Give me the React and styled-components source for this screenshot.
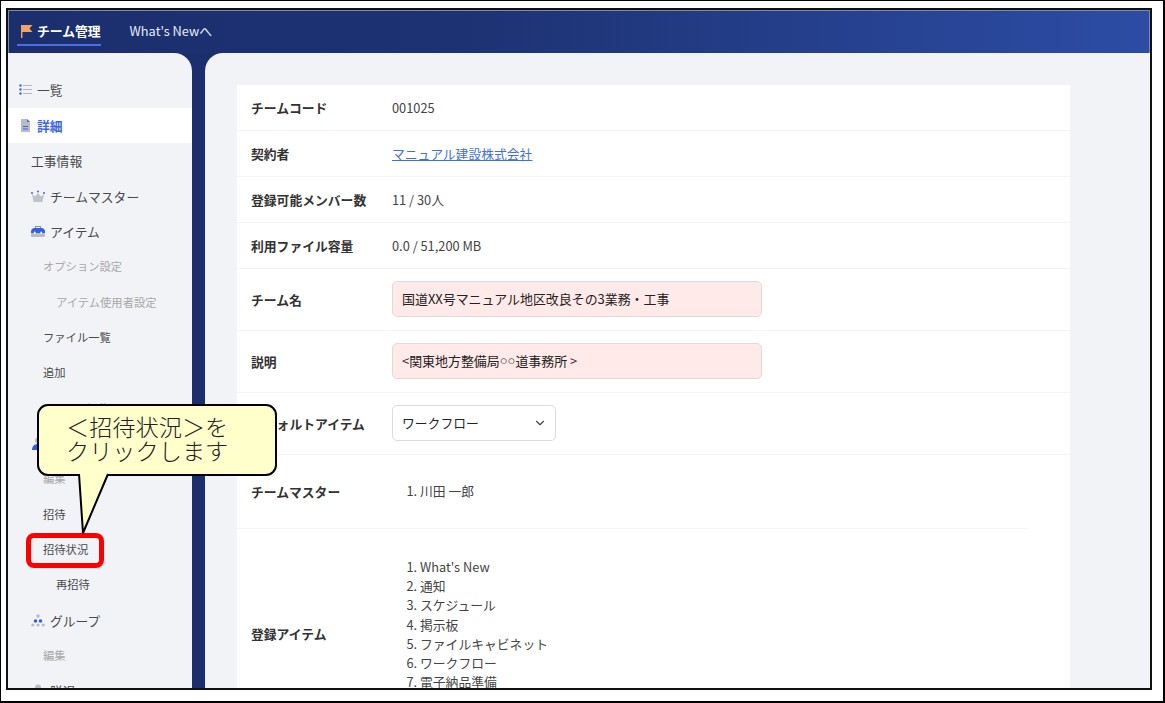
import styled, { createGlobalStyle } from "styled-components";
import { ChevronDown } from "lucide-react";

const GlobalStyle = createGlobalStyle`
    html, body {
        margin: 0;
        background: #fff;
    }
    * {
        box-sizing: border-box;
    }
`

const FlagIcon = () => (
    <svg width="13" height="14" viewBox="0 0 13 14">
        <path d="M1 1h11.5L9.5 4.5l3 3.5H2.4v6H1z" fill="#f4a263" />
    </svg>
)

const ListIcon = () => (
    <svg width="13" height="13" viewBox="0 0 13 13">
        <g fill="#3f68e0">
            <circle cx="1.5" cy="2.5" r="1.2" />
            <circle cx="1.5" cy="6.5" r="1.2" />
            <circle cx="1.5" cy="10.5" r="1.2" />
        </g>
        <g fill="#b4b7bd">
            <rect x="4" y="2" width="9" height="1" />
            <rect x="4" y="6" width="9" height="1" />
            <rect x="4" y="10" width="9" height="1" />
        </g>
    </svg>
)

const DocIcon = () => (
    <svg width="13" height="13" viewBox="0 0 13 13">
        <path d="M2 0h6l3 3v10H2z" fill="#b9bcc4" />
        <path d="M8 0l3 3H8z" fill="#3f68e0" />
        <rect x="4" y="7" width="5" height="1" fill="#3f68e0" />
        <rect x="4" y="9.5" width="5" height="1" fill="#3f68e0" />
    </svg>
)

const CrownIcon = () => (
    <svg width="14" height="13" viewBox="0 0 14 13">
        <path d="M1 4l3 2.5L7 3l3 3.500L13 4l-1.500 8h-9z" fill="#c0c2c8" />
        <circle cx="1" cy="3" r="1" fill="#3f68e0" />
        <circle cx="7" cy="1.500" r="1" fill="#3f68e0" />
        <circle cx="13" cy="3" r="1" fill="#3f68e0" />
    </svg>
)

const BoxIcon = () => (
    <svg width="14" height="13" viewBox="0 0 14 13">
        <path d="M4.500 3.500V1.500h5V3.500" fill="none" stroke="#8d93a3" strokeWidth="1.200" />
        <path d="M0 7a4 4 0 0 1 4-4h6a4 4 0 0 1 4 4v1H0z" fill="#2f5fe6" />
        <rect x="0" y="8" width="14" height="4" rx="1" fill="#b9bcc4" />
        <rect x="3" y="6.500" width="1.500" height="2.500" rx="0.700" fill="#fff" />
        <rect x="9.500" y="6.500" width="1.500" height="2.500" rx="0.700" fill="#fff" />
    </svg>
)

const PersonIcon = () => (
    <svg width="14" height="13" viewBox="0 0 14 13">
        <circle cx="7" cy="3.500" r="3" fill="#b9bcc4" />
        <path d="M1 13c0-4 2.500-6 6-6s6 2 6 6z" fill="#2f5fe6" />
    </svg>
)

const GroupIcon = () => (
    <svg width="14" height="13" viewBox="0 0 14 13">
        <g fill="#b9bcc4">
            <circle cx="7" cy="2" r="1.800" />
            <circle cx="1.800" cy="11" r="1.600" />
            <circle cx="12.200" cy="11" r="1.600" />
            <circle cx="7" cy="11" r="1.600" />
        </g>
        <g fill="#2f5fe6">
            <circle cx="4.500" cy="7" r="1.800" />
            <circle cx="9.500" cy="7" r="1.800" />
        </g>
    </svg>
)

const menu = [
    { label: "一覧", level: 0, icon: <ListIcon /> },
    { label: "詳細", level: 0, icon: <DocIcon />, active: true },
    { label: "工事情報", level: 1 },
    { label: "チームマスター", level: 1, icon: <CrownIcon /> },
    { label: "アイテム", level: 1, icon: <BoxIcon /> },
    { label: "オプション設定", level: 2, muted: true },
    { label: "アイテム使用者設定", level: 3, muted: true },
    { label: "ファイル一覧", level: 2 },
    { label: "追加", level: 2 },
    { label: "アイテム編集", level: 2, muted: true },
    { label: "メンバー", level: 1, icon: <PersonIcon /> },
    { label: "編集", level: 2, muted: true },
    { label: "招待", level: 2 },
    { label: "招待状況", level: 2, marked: true },
    { label: "再招待", level: 3 },
    { label: "グループ", level: 1, icon: <GroupIcon /> },
    { label: "編集", level: 2, muted: true },
    { label: "脱退", level: 1, icon: <PersonIcon /> },
]

const items = ["What's New", "通知", "スケジュール", "掲示板", "ファイルキャビネット", "ワークフロー", "電子納品準備"]

const App = () => {
    return (
        <Page>
            <GlobalStyle />
            <Frame>
                <Header>
                    <Brand><FlagIcon />チーム管理</Brand>
                    <NavLink>What's Newへ</NavLink>
                </Header>
                <Body>
                    <Sidebar>
                        {menu.map((item, i) => (
                            <MenuItem key={i} $level={item.level} $muted={item.muted} $active={item.active}>
                                {item.icon}
                                <span>{item.label}</span>
                                {item.marked && <Marker />}
                            </MenuItem>
                        ))}
                    </Sidebar>
                    <Main>
                        <Card>
                            <Row $height={46}>
                                <Label>チームコード</Label>
                                <Value>001025</Value>
                            </Row>
                            <Row $height={46}>
                                <Label>契約者</Label>
                                <Value><a href="#">マニュアル建設株式会社</a></Value>
                            </Row>
                            <Row $height={46}>
                                <Label>登録可能メンバー数</Label>
                                <Value>11 / 30人</Value>
                            </Row>
                            <Row $height={46}>
                                <Label>利用ファイル容量</Label>
                                <Value>0.0 / 51,200 MB</Value>
                            </Row>
                            <Row $height={62}>
                                <Label>チーム名</Label>
                                <Field>国道XX号マニュアル地区改良その3業務・工事</Field>
                            </Row>
                            <Row $height={62}>
                                <Label>説明</Label>
                                <Field>&lt;関東地方整備局<NarrowMark>○○</NarrowMark>道事務所 &gt;</Field>
                            </Row>
                            <Row $height={62}>
                                <Label>デフォルトアイテム</Label>
                                <SelectBox>
                                    ワークフロー
                                    <ChevronDown size={14} color="#444" />
                                </SelectBox>
                            </Row>
                            <Row $height={74} $short>
                                <Label>チームマスター</Label>
                                <Numbered>
                                    <li>川田 一郎</li>
                                </Numbered>
                            </Row>
                            <Row $height={210}>
                                <Label>登録アイテム</Label>
                                <TopNumbered>
                                    {items.map((value, i) => (
                                        <li key={i}>{value}</li>
                                    ))}
                                </TopNumbered>
                            </Row>
                        </Card>
                    </Main>
                </Body>
            </Frame>
            <Callout>
                ＜招待状況＞を<br />クリックします
                <Tail width="34" height="60" viewBox="0 0 34 60">
                    <path d="M1 0L5 59L30 0" fill="#ffffcc" stroke="#000" strokeWidth="2" />
                </Tail>
            </Callout>
        </Page>
    )
}

const Page = styled.div`
    position: relative;
    width: 1165px;
    height: 703px;
    padding: 7px 11px 11px 5px;
    border-style: solid;
    border-color: #000;
    border-width: 1px 2px 2px 1px;
    background: #fff;
    overflow: hidden;
    font-family: "Noto Sans CJK JP", "Noto Sans", sans-serif;
    font-size: 12.8px;
`

const Frame = styled.div`
    height: 100%;
    border: 2px solid #111;
    display: flex;
    flex-direction: column;
    overflow: hidden;
    background: #1b2f6f;
`

const Header = styled.header`
    height: 43px;
    flex-shrink: 0;
    display: flex;
    align-items: center;
    gap: 29px;
    padding-left: 8px;
    background: linear-gradient(90deg, #1b2f6f 0%, #1d3272 40%, #2c4ca5 100%);
    border: solid #7f88a8;
    border-width: 1px 1px 0 1px;
`

const Brand = styled.div`
    display: flex;
    align-items: center;
    gap: 4px;
    height: 27px;
    padding: 0 0 1px 3px;
    color: #fff;
    font-weight: 700;
    border-bottom: 2px solid #4a6fe0;
`

const NavLink = styled.div`
    margin-bottom: 4px;
    color: #e6ebf7;
`

const Body = styled.div`
    flex: 1;
    min-height: 0;
    display: flex;
    gap: 13px;
`

const Sidebar = styled.nav`
    width: 184px;
    flex-shrink: 0;
    padding-top: 19.3px;
    background: #f2f3f7;
    border-top-right-radius: 18px;
    overflow: hidden;
`

const indents = [11, 23, 35, 48];

const MenuItem = styled.div`
    position: relative;
    height: 35.35px;
    display: flex;
    align-items: center;
    gap: 5px;
    padding-left: ${(props) => indents[props.$level]}px;
    padding-bottom: ${(props) => (props.$level > 1 ? "1px" : "0")};
    font-size: ${(props) => (props.$level > 1 ? "11.3px" : "12.8px")};
    font-weight: ${(props) => (props.$active ? 700 : 400)};
    color: ${(props) => (props.$active ? "#3f68e0" : props.$muted ? "#a8a8a8" : "#4a4a4a")};
    background: ${(props) => (props.$active ? "#fff" : "transparent")};

    svg {
        flex-shrink: 0;
    }
`

const Marker = styled.div`
    position: absolute;
    left: 18px;
    top: 1px;
    width: 78px;
    height: 35px;
    border: 5px solid #f00;
    border-radius: 8px;
`

const Main = styled.main`
    flex: 1;
    min-width: 0;
    padding: 32px 0 0 32px;
    background: #f2f3f7;
    border-top-left-radius: 18px;
    overflow: hidden;
`

const Card = styled.div`
    width: 833px;
    background: #fff;
`

const Row = styled.div`
    position: relative;
    height: ${(props) => props.$height}px;
    display: flex;
    align-items: center;
    padding-left: 14px;
    padding-bottom: ${(props) => (props.$short ? "2px" : "0")};
    border-bottom: ${(props) => (props.$short ? "none" : "1.5px solid #f3f4f7")};

    &::after {
        content: ${(props) => (props.$short ? '""' : "none")};
        position: absolute;
        left: 0;
        bottom: 0;
        width: 791px;
        height: 1px;
        background: #f3f4f7;
    }
`

const Label = styled.div`
    width: 141px;
    flex-shrink: 0;
    font-weight: 700;
    color: #333;
    white-space: nowrap;
`

const Value = styled.div`
    color: #444;

    a {
        color: #3f6fe0;
    }
`

const Field = styled.div`
    width: 370px;
    height: 36px;
    margin-bottom: 2px;
    display: flex;
    align-items: center;
    padding: 0 9px;
    border: 1px solid #e4d8da;
    border-radius: 5px;
    background: #ffe9e9;
    color: #222;
    font-size: 12.95px;
    white-space: pre;
`

const NarrowMark = styled.span`
    font-family: "Liberation Sans", sans-serif;
`

const SelectBox = styled.div`
    width: 164px;
    height: 36px;
    margin-bottom: 2px;
    display: flex;
    align-items: center;
    justify-content: space-between;
    padding: 0 8px 0 9px;
    border: 1px solid #d8dbe0;
    border-radius: 5px;
    background: #fff;
    color: #222;
`

const Numbered = styled.ol`
    margin: 0;
    padding-left: 28px;
    color: #444;
    line-height: 19.2px;
`

const TopNumbered = styled(Numbered)`
    align-self: flex-start;
    padding-top: 28px;
`

const Callout = styled.div`
    position: absolute;
    left: 36px;
    top: 403px;
    width: 240px;
    height: 72px;
    padding: 8px 0 0 27px;
    background: #ffffcc;
    border: 2px solid #000;
    border-radius: 11px;
    color: #222;
    font-size: 23.2px;
    font-weight: 300;
    line-height: 24px;
    white-space: nowrap;
`

const Tail = styled.svg`
    position: absolute;
    left: 39px;
    top: 68px;
    overflow: visible;
`

export default App;
